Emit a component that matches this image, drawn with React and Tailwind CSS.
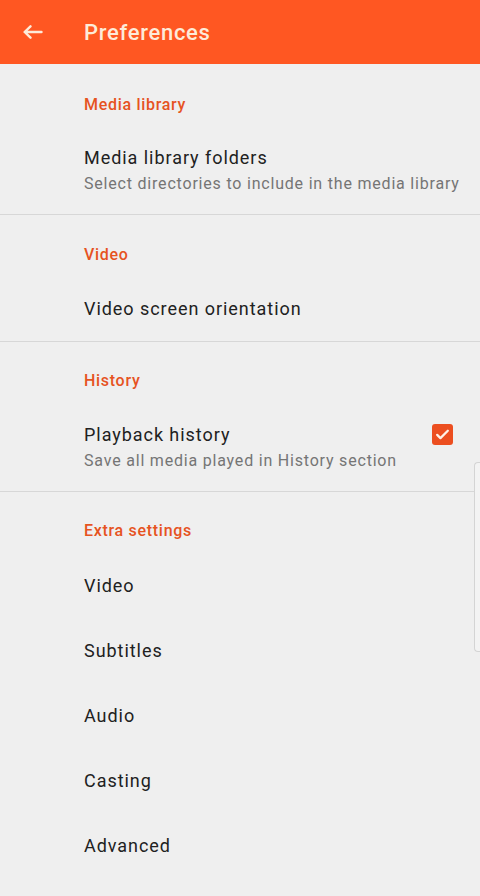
import React from "react";

const font = { fontFamily: "Roboto, 'Noto Sans', sans-serif" };

function Category({ children, pt }) {
  return (
    <div className={`pl-[84px] ${pt} text-[16px] leading-6 font-medium tracking-[0.7px] text-[#e6531f]`}>
      {children}
    </div>
  );
}

function CheckBox() {
  return (
    <div className="w-[21px] h-[21px] rounded-[3px] bg-[#ec4e1f] flex items-center justify-center">
      <svg width="17" height="17" viewBox="0 0 24 24" fill="none">
        <path
          d="M4.5 12.5l4.6 4.6L19.5 6.8"
          stroke="#fff1e6"
          strokeWidth="3.2"
          strokeLinecap="round"
          strokeLinejoin="round"
        />
      </svg>
    </div>
  );
}

const extras = ["Video", "Subtitles", "Audio", "Casting", "Advanced"];

export default function App() {
  return (
    <div className="relative w-[480px] h-[896px] overflow-hidden bg-[#efefef]" style={font}>
      <header className="h-16 bg-[#ff5722] flex items-center">
        <div className="w-[84px] pl-[23px] flex items-center">
          <svg width="20" height="14" viewBox="0 0 20 14" fill="none">
            <path
              d="M18.5 7H1.8M7.5 1.3L1.6 7l5.9 5.7"
              stroke="#fdebd9"
              strokeWidth="2.4"
              strokeLinecap="round"
              strokeLinejoin="round"
            />
          </svg>
        </div>
        <h1 className="text-[22px] font-medium tracking-[0.7px] text-[#fdebd9]">Preferences</h1>
      </header>

      <section className="border-b border-[#d7d7d7]">
        <Category pt="pt-[29px]">Media library</Category>
        <div className="pl-[84px] pr-2 pt-[28px] pb-[17px]">
          <div className="text-[18px] leading-[26px] tracking-[0.95px] text-[#212121]">Media library folders</div>
          <div className="text-[16px] leading-[26px] tracking-[0.8px] text-[#757575] whitespace-nowrap">
            Select directories to include in the media library
          </div>
        </div>
      </section>

      <section className="border-b border-[#d7d7d7]">
        <Category pt="pt-[28px]">Video</Category>
        <div className="pl-[84px] pt-[29px] pb-[19px]">
          <div className="text-[18px] leading-[26px] tracking-[0.95px] text-[#212121]">Video screen orientation</div>
        </div>
      </section>

      <section className="border-b border-[#d7d7d7]">
        <Category pt="pt-[27px]">History</Category>
        <div className="pl-[84px] pr-[27px] pt-[29px] pb-[17px] flex items-center justify-between">
          <div>
            <div className="text-[18px] leading-[26px] tracking-[0.95px] text-[#212121]">Playback history</div>
            <div className="text-[16px] leading-[26px] tracking-[0.8px] text-[#757575]">
              Save all media played in History section
            </div>
          </div>
          <div className="-mt-[27px]">
            <CheckBox />
          </div>
        </div>
      </section>

      <section>
        <Category pt="pt-[27px]">Extra settings</Category>
        <div className="pt-[10px]">
          {extras.map((item) => (
            <div
              key={item}
              className="h-[65px] pl-[84px] flex items-center text-[18px] tracking-[0.95px] text-[#212121]"
            >
              {item}
            </div>
          ))}
        </div>
      </section>

      <div className="absolute right-0 top-[462px] h-[190px] w-[6px] rounded-l-[4px] border border-r-0 border-[#d4d4d4] bg-[#f3f3f3]" />
    </div>
  );
}
